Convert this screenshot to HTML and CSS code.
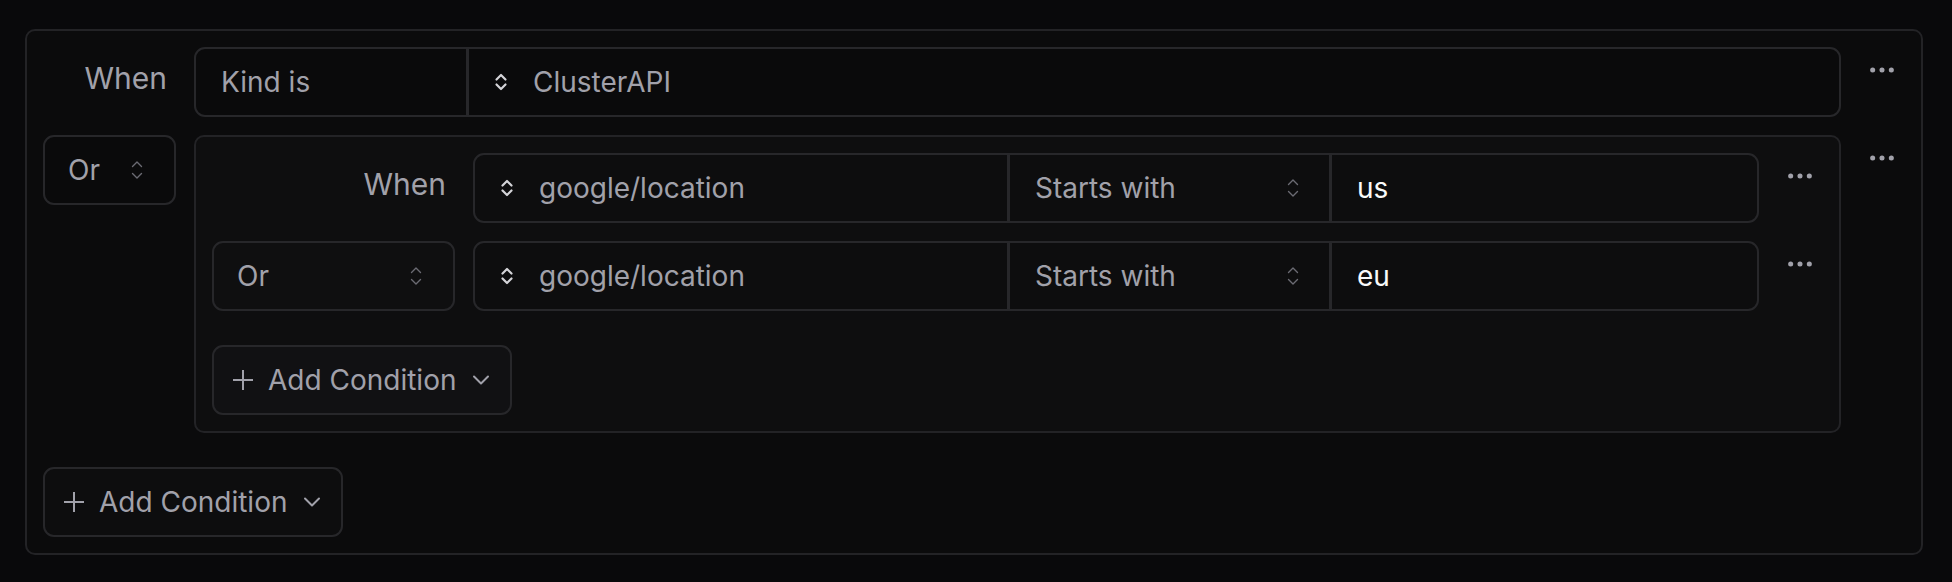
FILE: index.html
```html
<!DOCTYPE html>
<html lang="en">
<head>
<meta charset="utf-8">
<title>Conditions</title>
<link rel="stylesheet" href="styles.css">
</head>
<body>
<div class="page">
  <div class="group outer">
    <div class="label">When</div>
    <div class="field">
      <div class="seg seg-kind">Kind is</div>
      <div class="seg seg-fill">
        <svg class="caret-bold" width="14" height="20" viewBox="0 0 14 20"><path d="M2.5 7.5 7 3l4.5 4.5M2.5 12.5 7 17l4.5-4.5"/></svg>
        <span>ClusterAPI</span>
      </div>
    </div>
    <button class="more" aria-label="More"><svg width="32" height="32" viewBox="0 0 24 24"><circle cx="5" cy="12" r="1.1"/><circle cx="12" cy="12" r="1.1"/><circle cx="19" cy="12" r="1.1"/></svg></button>

    <div class="select">
      <span>Or</span>
      <svg class="caret-thin" width="12" height="20" viewBox="0 0 12 20"><path d="M1.5 6.5 6 2l4.5 4.5M1.5 13.5 6 18l4.5-4.5"/></svg>
    </div>
    <div class="group inner">
      <div class="label">When</div>
      <div class="field">
        <div class="seg seg-key">
          <svg class="caret-bold" width="14" height="20" viewBox="0 0 14 20"><path d="M2.5 7.5 7 3l4.5 4.5M2.5 12.5 7 17l4.5-4.5"/></svg>
          <span>google/location</span>
        </div>
        <div class="seg seg-op">
          <span>Starts with</span>
          <svg class="caret-thin" width="12" height="20" viewBox="0 0 12 20"><path d="M1.5 6.5 6 2l4.5 4.5M1.5 13.5 6 18l4.5-4.5"/></svg>
        </div>
        <div class="seg seg-fill value">us</div>
      </div>
      <button class="more" aria-label="More"><svg width="32" height="32" viewBox="0 0 24 24"><circle cx="5" cy="12" r="1.1"/><circle cx="12" cy="12" r="1.1"/><circle cx="19" cy="12" r="1.1"/></svg></button>

      <div class="select">
        <span>Or</span>
        <svg class="caret-thin" width="12" height="20" viewBox="0 0 12 20"><path d="M1.5 6.5 6 2l4.5 4.5M1.5 13.5 6 18l4.5-4.5"/></svg>
      </div>
      <div class="field">
        <div class="seg seg-key">
          <svg class="caret-bold" width="14" height="20" viewBox="0 0 14 20"><path d="M2.5 7.5 7 3l4.5 4.5M2.5 12.5 7 17l4.5-4.5"/></svg>
          <span>google/location</span>
        </div>
        <div class="seg seg-op">
          <span>Starts with</span>
          <svg class="caret-thin" width="12" height="20" viewBox="0 0 12 20"><path d="M1.5 6.5 6 2l4.5 4.5M1.5 13.5 6 18l4.5-4.5"/></svg>
        </div>
        <div class="seg seg-fill value">eu</div>
      </div>
      <button class="more" aria-label="More"><svg width="32" height="32" viewBox="0 0 24 24"><circle cx="5" cy="12" r="1.1"/><circle cx="12" cy="12" r="1.1"/><circle cx="19" cy="12" r="1.1"/></svg></button>

      <button class="add add-inner">
        <svg class="plus" width="22" height="22" viewBox="0 0 22 22"><path d="M11 1v20M1 11h20"/></svg>
        <span>Add Condition</span>
        <svg class="down" width="18" height="10" viewBox="0 0 18 10"><path d="M2 1.5l7 7 7-7"/></svg>
      </button>
    </div>
    <button class="more" aria-label="More"><svg width="32" height="32" viewBox="0 0 24 24"><circle cx="5" cy="12" r="1.1"/><circle cx="12" cy="12" r="1.1"/><circle cx="19" cy="12" r="1.1"/></svg></button>

    <button class="add">
      <svg class="plus" width="22" height="22" viewBox="0 0 22 22"><path d="M11 1v20M1 11h20"/></svg>
      <span>Add Condition</span>
      <svg class="down" width="18" height="10" viewBox="0 0 18 10"><path d="M2 1.5l7 7 7-7"/></svg>
    </button>
  </div>
</div>
</body>
</html>
```

FILE: styles.css
```css
* { box-sizing: border-box; }

html, body {
  margin: 0;
  background: #09090b;
}

body {
  font-family: Inter, "Noto Sans", sans-serif;
  color: #a1a1aa;
}

.page {
  padding: 29px 29px 0 25px;
}

.group {
  display: grid;
  grid-template-columns: var(--lab) minmax(0, 1fr) 46px;
  column-gap: 18px;
  row-gap: 18px;
  align-items: start;
  border: 2px solid #232326;
  border-radius: 10px;
  padding: 16px;
}

.outer {
  --lab: 133px;
  background: #0b0b0c;
}

.inner {
  --lab: 243px;
  background: #0e0e0f;
}

.label {
  height: 62px;
  display: flex;
  align-items: center;
  justify-content: flex-end;
  padding-right: 9px;
  font-size: 30px;
  color: #a1a1aa;
}

.field {
  display: flex;
  height: 70px;
  border: 2px solid #27272a;
  border-radius: 11px;
  overflow: hidden;
}

.outer > .field { background: #0a0a0b; }
.inner > .field { background: #0d0d0e; }

.seg {
  display: flex;
  align-items: center;
  padding: 0 25px;
  border-right: 3px solid #27272a;
  font-size: 28px;
  color: #a1a1aa;
  white-space: nowrap;
}

.seg-kind { width: 273px; }
.seg-key { width: 535px; }
.seg-op {
  width: 322px;
  justify-content: space-between;
  padding-right: 30px;
}
.seg-fill {
  flex: 1;
  border-right: none;
}
.value { color: #fafafa; }

.caret-bold {
  flex: none;
  margin-right: 25px;
  fill: none;
  stroke: #d4d4d8;
  stroke-width: 2.2;
  stroke-linecap: round;
  stroke-linejoin: round;
}

.caret-thin {
  flex: none;
  fill: none;
  stroke: #6b6b73;
  stroke-width: 1.4;
  stroke-linecap: round;
  stroke-linejoin: round;
}

.select {
  height: 70px;
  display: flex;
  align-items: center;
  justify-content: space-between;
  padding: 0 31px 0 23px;
  border: 2px solid #27272a;
  border-radius: 11px;
  font-size: 28px;
  color: #a1a1aa;
}

.outer > .select { background: #0a0a0b; }
.inner > .select { background: #0f0f10; }

.more {
  width: 46px;
  height: 46px;
  padding: 0;
  border: none;
  background: none;
  display: flex;
  align-items: center;
  justify-content: center;
}

.more svg {
  fill: #a1a1aa;
  stroke: #a1a1aa;
  stroke-width: 1.6;
}

.add {
  grid-column: 1 / -1;
  justify-self: start;
  margin-top: 16px;
  height: 70px;
  display: flex;
  align-items: center;
  padding: 0 20px 0 18px;
  border: 2px solid #27272a;
  border-radius: 11px;
  background: #0d0d0e;
  font-family: inherit;
  font-size: 28px;
  color: #a1a1aa;
}

.add-inner { background: #111113; }

.plus {
  margin-right: 14px;
  fill: none;
  stroke: #a1a1aa;
  stroke-width: 2;
}

.down {
  margin-left: 16px;
  fill: none;
  stroke: #a1a1aa;
  stroke-width: 2;
  stroke-linecap: round;
  stroke-linejoin: round;
}
```
